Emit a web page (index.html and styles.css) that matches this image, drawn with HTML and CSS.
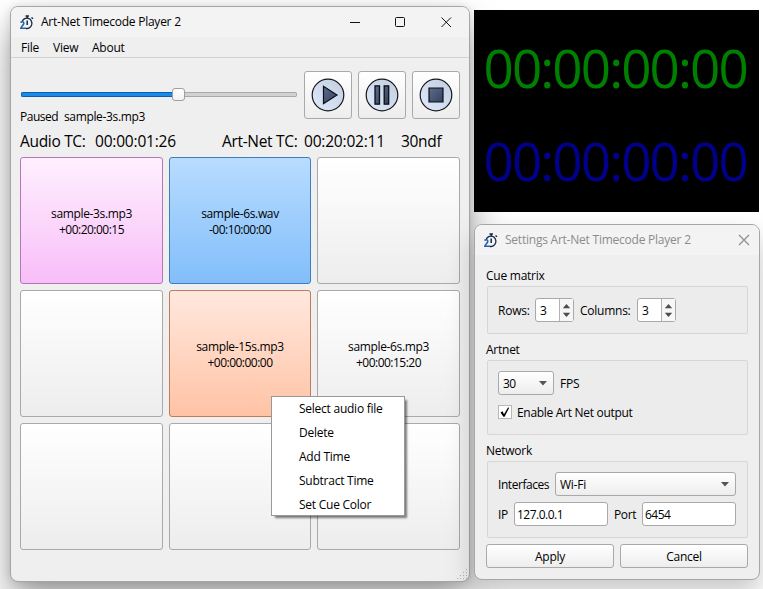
FILE: index.html
```html
<!DOCTYPE html>
<html lang="en">
<head>
<meta charset="utf-8">
<title>Art-Net Timecode Player 2</title>
<link rel="stylesheet" href="styles.css">
</head>
<body>
<svg class="defs" width="0" height="0">
  <defs>
    <linearGradient id="disc" x1="0" y1="1" x2="1" y2="0"><stop offset="0" stop-color="#dfeafc"/><stop offset="1" stop-color="#c3cde0"/></linearGradient>
    <linearGradient id="glyph" x1="0" y1="0" x2="1" y2="1"><stop offset="0" stop-color="#5d6b8c"/><stop offset="1" stop-color="#36415f"/></linearGradient>
    <symbol id="logo" viewBox="0 0 14 15">
      <path d="M2.200 6.500A5 5.200 0 1 1 5.500 13.300" fill="none" stroke="#14284b" stroke-width="1.300"/>
      <path d="M5.500 1h3.500M7.200 1v2.200M11.500 2.500l1.500 1.300M7.200 5.500v4.500" fill="none" stroke="#14284b" stroke-width="1.500"/>
      <path d="M.6 7.500c.8-1.300 3.500-1 3.200 1C3.500 10.200 1.500 11.200.8 13.200h5" fill="none" stroke="#2461a4" stroke-width="1.500"/>
    </symbol>
  </defs>
</svg>
<main class="desktop">
  <section class="window player">
    <header class="titlebar">
      <svg class="logo" width="14" height="15"><use href="#logo"/></svg>
      <span class="title">Art-Net Timecode Player 2</span>
      <svg class="controls" width="104" height="14" viewBox="0 0 104 14" fill="none" stroke="#111" stroke-width="1">
        <path d="M0 7.500h10"/><rect x="45.500" y="2.500" width="9" height="9" rx="1"/><path d="M91.500 2.500l9.500 9.500M101 2.500L91.500 12"/>
      </svg>
    </header>
    <nav class="menubar"><span class="m-file">File</span><span class="m-view">View</span><span>About</span></nav>
    <div class="transport">
      <div class="progress">
        <div class="slider"><div class="fill"></div><div class="handle"></div><div class="rest"></div></div>
        <div class="status"><span class="state">Paused</span><span class="file">sample-3s.mp3</span></div>
      </div>
      <button class="tbtn"><svg width="34" height="34" viewBox="0 0 34 34"><circle cx="17" cy="17" r="15.800" fill="url(#disc)" stroke="#15171c" stroke-width="1.200"/><path d="M12.500 8.300v17.400L26 17z" fill="url(#glyph)" stroke="#0b0e14" stroke-width="1.200"/></svg></button>
      <button class="tbtn"><svg width="34" height="34" viewBox="0 0 34 34"><circle cx="17" cy="17" r="15.800" fill="url(#disc)" stroke="#15171c" stroke-width="1.200"/><path d="M10 7.800h4.500v18.400H10zM19.200 7.800h4.500v18.400h-4.500z" fill="url(#glyph)" stroke="#0b0e14" stroke-width="1.300"/></svg></button>
      <button class="tbtn"><svg width="34" height="34" viewBox="0 0 34 34"><circle cx="17" cy="17" r="15.800" fill="url(#disc)" stroke="#15171c" stroke-width="1.200"/><path d="M10 10h14v14H10z" fill="url(#glyph)" stroke="#0b0e14" stroke-width="1.200"/></svg></button>
    </div>
    <div class="timecodes"><span class="tc1">Audio TC:</span><span class="tc2">00:00:01:26</span><span class="tc3">Art-Net TC:</span><span class="tc4">00:20:02:11</span><span class="tc5">30ndf</span></div>
    <div class="cues">
      <button class="cue pink"><span class="name">sample-3s.mp3</span><span class="off">+00:20:00:15</span></button>
      <button class="cue blue"><span class="name">sample-6s.wav</span><span class="off">-00:10:00:00</span></button>
      <button class="cue"></button>
      <button class="cue"></button>
      <button class="cue orange"><span class="name">sample-15s.mp3</span><span class="off">+00:00:00:00</span></button>
      <button class="cue"><span class="name">sample-6s.mp3</span><span class="off">+00:00:15:20</span></button>
      <button class="cue"></button>
      <button class="cue"></button>
      <button class="cue"></button>
    </div>
    <svg class="grip" width="11" height="11" viewBox="0 0 11 11" fill="#b5b5b5"><path d="M9 0h1v1H9zM6 3h1v1H6zM9 3h1v1H9zM3 6h1v1H3zM6 6h1v1H6zM9 6h1v1H9zM0 9h1v1H0zM3 9h1v1H3zM6 9h1v1H6zM9 9h1v1H9z"/></svg>
  </section>

  <section class="clock"><div class="audio">00:00:00:00</div><div class="net">00:00:00:00</div></section>

  <section class="window settings">
    <header class="titlebar">
      <svg class="logo" width="14" height="15"><use href="#logo"/></svg>
      <span class="title dim">Settings Art-Net Timecode Player 2</span>
      <svg class="close" width="12" height="12" viewBox="0 0 12 12" fill="none" stroke="#8c8c8c" stroke-width="1.100"><path d="M1 1l10 10M11 1L1 11"/></svg>
    </header>
    <div class="panel">
      <h2>Cue matrix</h2>
      <div class="group matrix">
        <label class="l-rows">Rows:</label>
        <div class="spin"><span>3</span><svg width="14" height="21" viewBox="0 0 14 21" fill="#4d4d4d"><path d="M3 8.500L7 4l4 4.500zM3 13.500L7 18l4-4.500z"/></svg></div>
        <label class="l-cols">Columns:</label>
        <div class="spin"><span>3</span><svg width="14" height="21" viewBox="0 0 14 21" fill="#4d4d4d"><path d="M3 8.500L7 4l4 4.500zM3 13.500L7 18l4-4.500z"/></svg></div>
      </div>
      <h2>Artnet</h2>
      <div class="group artnet">
        <div class="line"><div class="combo fps"><span>30</span><svg width="8" height="5" fill="#555"><path d="M0 0h8L4 4.500z"/></svg></div><label class="l-fps">FPS</label></div>
        <div class="line check-line"><span class="check"><svg width="12" height="12" viewBox="0 0 12 12"><path d="M1.500 6.500L3.500 5.300 5 8.300 9 1.500l1.200.3L5.600 10.800H4.400z" fill="#000"/></svg></span><label class="l-enable">Enable Art Net output</label></div>
      </div>
      <h2>Network</h2>
      <div class="group network">
        <div class="line"><label class="l-if">Interfaces</label><div class="combo iface"><span>Wi-Fi</span><svg width="8" height="5" fill="#555"><path d="M0 0h8L4 4.500z"/></svg></div></div>
        <div class="line addr"><label class="l-ip">IP</label><div class="field">127.0.0.1</div><label class="l-port">Port</label><div class="field">6454</div></div>
      </div>
      <div class="actions"><button>Apply</button><button>Cancel</button></div>
    </div>
  </section>

  <div class="context">
    <span>Select audio file</span><span>Delete</span><span>Add Time</span><span>Subtract Time</span><span>Set Cue Color</span>
  </div>
</main>
</body>
</html>
```
FILE: styles.css
```css
* { box-sizing: border-box; }
body { margin: 0; background: #fff; color: #000; font: 12px/16px "Open Sans", "Noto Sans", sans-serif; letter-spacing: -0.25px; }
.defs { position: absolute; }
.desktop { position: relative; width: 763px; height: 589px; overflow: hidden; }
button { margin: 0; padding: 0; font: inherit; letter-spacing: inherit; color: inherit; border: 1px solid #a9a9a9; border-radius: 3px; background: linear-gradient(#fff, #ededed); }
span, label { white-space: nowrap; }
.window { position: absolute; background: #efefef; border: 1px solid #a6a6a6; border-radius: 8px; display: flex; flex-direction: column; }
.player { left: 10px; top: 6px; width: 460px; height: 576px; box-shadow: 0 20px 36px rgba(0,0,0,.38), 0 0 8px rgba(0,0,0,.12); }
.settings { left: 474px; top: 224px; width: 286px; height: 356px; box-shadow: 0 14px 28px rgba(0,0,0,.22); }
.titlebar { display: flex; align-items: center; height: 30px; padding-left: 9px; background: #f3f3f3; border-radius: 7px 7px 0 0; flex: none; }
.title { margin-left: 7px; }
.dim { color: #8c8c8c; letter-spacing: -0.23px; }
.controls { margin-left: auto; margin-right: 15px; }
.close { margin-left: auto; margin-right: 9px; }
.menubar { display: flex; height: 21px; flex: none; padding: 3px 0 0 10px; border-bottom: 1px solid #d2d2d2; }
.m-file { width: 32px; }
.m-view { width: 39px; }
.transport { display: flex; gap: 6px; padding: 13px 9px 0; }
.progress { width: 278px; padding: 17px 0 0 1px; }
.slider { display: flex; align-items: center; height: 13px; }
.fill { width: 151px; height: 5px; background: #1a8ae8; border: 1px solid #0a5eae; border-right: 0; border-radius: 2px 0 0 2px; }
.handle { width: 13px; height: 13px; border: 1px solid #a0a0a0; border-radius: 3px; background: linear-gradient(#fff, #f2f2f2); }
.rest { width: 112px; height: 5px; background: #d2d2d2; border: 1px solid #a9a9a9; border-left: 0; border-radius: 0 2px 2px 0; }
.status { display: flex; margin: 8px 0 0 -1px; }
.state { width: 44px; letter-spacing: -0.5px; }
.file { letter-spacing: -0.35px; }
.tbtn { width: 48px; height: 48px; display: flex; align-items: center; justify-content: center; }
.timecodes { display: flex; height: 32px; padding: 6px 0 0 9px; margin-bottom: 0; font-size: 15.5px; line-height: 20px; letter-spacing: -0.32px; }
.tc1 { width: 75px; }
.tc2 { width: 127px; }
.tc2, .tc4 { letter-spacing: -0.2px; }
.tc3 { width: 82px; }
.tc4 { width: 97px; }
.cues { display: grid; grid-template-columns: 143px 142px 143px; grid-auto-rows: 127px; gap: 6px; margin-left: 9px; }
.cue { display: flex; flex-direction: column; align-items: center; justify-content: center; padding-top: 3px; }
.name { letter-spacing: -0.35px; }
.off { letter-spacing: -0.52px; }
.pink { background: linear-gradient(#fff0ff, #f8bef8); border-color: #b874b8; }
.blue { background: linear-gradient(#b8dcff, #82befa); border-color: #3f7dbb; }
.orange { background: linear-gradient(#ffe8de, #ffc3a5); border-color: #c07a5c; }
.grip { position: absolute; right: 1px; bottom: 1px; }
.clock { position: absolute; left: 474px; top: 10px; width: 285px; height: 202px; background: #000; font-size: 53px; line-height: 93px; letter-spacing: -1.9px; padding: 11px 0 0 9.500px; white-space: nowrap; }
.audio { color: #008000; }
.net { color: #00008b; }
.panel { padding: 13px 11px 0; }
h2 { margin: 0 0 2px; font-size: 12px; font-weight: 400; line-height: 16px; }
.group { border: 1px solid #d6d6d6; border-radius: 2px; background: #ececec; margin-left: 1px; width: 261px; padding: 0 0 0 10px; }
.line { display: flex; align-items: center; }
.group label, .combo span, .spin span { padding-top: 2px; }
.matrix { height: 48px; display: flex; align-items: center; margin-bottom: 8px; }
.l-rows { width: 37px; }
.l-cols { width: 57px; margin-left: 6px; }
.spin { display: flex; width: 39px; height: 24px; border: 1px solid #a9a9a9; border-radius: 3px; background: #fff; align-items: center; }
.spin span { width: 23px; padding-left: 4px; }
.spin svg { border-left: 1px solid #b4b4b4; background: #f7f7f7; height: 22px; }
.artnet { height: 75px; padding-top: 10px; margin-bottom: 8px; }
.combo { display: flex; align-items: center; justify-content: space-between; height: 24px; border: 1px solid #a9a9a9; border-radius: 3px; background: linear-gradient(#fff, #ededed); padding: 0 6px 0 4px; }
.fps { width: 56px; }
.fps span { letter-spacing: -0.5px; }
.l-fps { margin-left: 6px; }
.check-line { margin-top: 8px; }
.check { width: 14px; height: 14px; border: 1px solid #b8b8b8; background: #fff; display: flex; }
.l-enable { margin-left: 5px; letter-spacing: -0.3px; }
.network { height: 77px; padding-top: 10px; margin-bottom: 6px; }
.l-if { width: 57px; letter-spacing: -0.45px; }
.iface { width: 181px; }
.addr { margin-top: 6px; }
.l-ip { width: 16px; }
.field { width: 94px; height: 24px; border: 1px solid #a9a9a9; border-radius: 3px; background: #fff; padding: 4px 2px; letter-spacing: -0.5px; }
.l-port { width: 28px; margin-left: 6px; letter-spacing: -0.4px; }
.actions { display: flex; gap: 6px; }
.actions button { width: 128px; height: 24px; padding-top: 2px; }
.context { position: absolute; left: 271px; top: 396px; width: 134px; height: 120px; background: #fff; border: 1px solid #999; box-shadow: 3px 3px 2px -1px rgba(0,0,0,.5); display: flex; flex-direction: column; padding-left: 27px; line-height: 24px; }
```
